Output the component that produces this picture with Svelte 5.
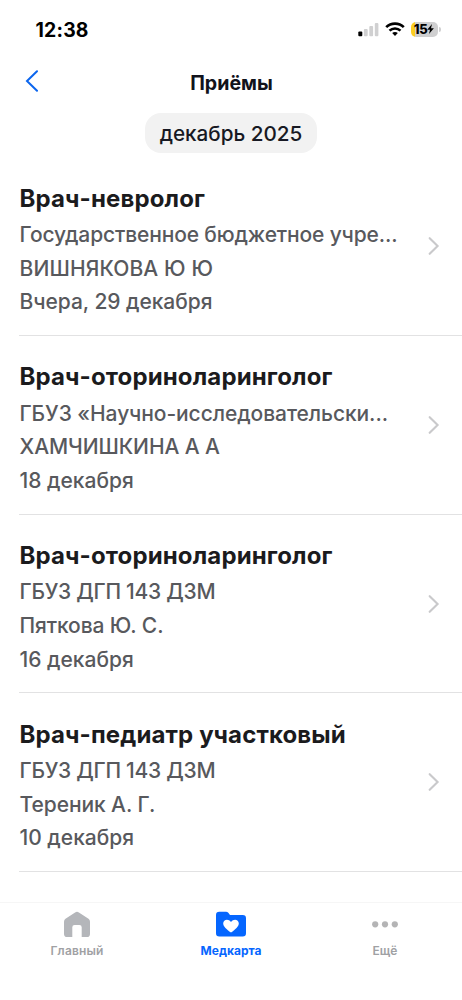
<script>
  const visits = [
    {
      title: 'Врач-невролог',
      lines: [['Государственное бюджетное учре...', -0.14], ['ВИШНЯКОВА Ю Ю', 0.13], ['Вчера, 29 декабря', -0.05]]
    },
    {
      title: 'Врач-оториноларинголог',
      lines: [['ГБУЗ «Научно-исследовательски...', -0.07], ['ХАМЧИШКИНА А А', -0.08], ['18 декабря', 0]]
    },
    {
      title: 'Врач-оториноларинголог',
      lines: [['ГБУЗ ДГП 143 ДЗМ', -0.28], ['Пяткова Ю. С.', -0.1], ['16 декабря', 0]]
    },
    {
      title: 'Врач-педиатр участковый',
      lines: [['ГБУЗ ДГП 143 ДЗМ', -0.28], ['Тереник А. Г.', -0.08], ['10 декабря', 0]]
    }
  ];
</script>

<div class="screen">
  <div class="status">
    <span class="time">12:38</span>
    <div class="indicators">
      <svg width="21" height="15" viewBox="0 0 21 15">
        <rect x="0.3" y="9.5" width="4" height="4.7" rx="1" fill="#000" />
        <rect x="5.9" y="7" width="3.8" height="7.2" rx="1" fill="#d0d0d1" />
        <rect x="11.3" y="4" width="3.8" height="10.2" rx="1" fill="#d0d0d1" />
        <rect x="16.8" y="1" width="3.6" height="13.2" rx="1" fill="#d0d0d1" />
      </svg>
      <svg class="wifi" width="20" height="15" viewBox="0 0 20 15">
        <g fill="none" stroke="#000" stroke-width="2.6">
          <path d="M1.2 5.1C6 .4 14 .4 18.8 5.1" />
          <path d="M4.5 8.6C7.6 5.7 12.4 5.7 15.5 8.6" />
        </g>
        <path d="M7.2 11.1C8.8 9.6 11.2 9.6 12.8 11.1L10 14Z" fill="#000" />
      </svg>
      <div class="battery">
        <span>15</span>
        <svg width="7" height="10" viewBox="0 0 7 10"><path d="M5 0L.2 5.7H3L2 10L6.9 4.2H4Z" fill="#000" /></svg>
      </div>
      <i class="cap"></i>
    </div>
  </div>

  <header>
    <svg width="14" height="22" viewBox="0 0 14 22"><path d="M12 1.2L2 11L12 20.8" fill="none" stroke="#0b65ee" stroke-width="2" stroke-linecap="round" /></svg>
    <h1>Приёмы</h1>
    <span></span>
  </header>

  <div class="month"><span>декабрь 2025</span></div>

  <main>
    {#each visits as v}
      <article>
        <div class="info">
          <h2>{v.title}</h2>
          {#each v.lines as [text, tracking]}
            <p style:letter-spacing="{tracking}px">{text}</p>
          {/each}
        </div>
        <svg width="12" height="18" viewBox="0 0 12 18"><path d="M1.7 1.2L9.6 9L1.7 16.8" fill="none" stroke="#c9c9cb" stroke-width="2.1" stroke-linecap="round" /></svg>
      </article>
    {/each}
  </main>

  <nav>
    <div class="tab">
      <svg width="30" height="30" viewBox="0 0 30 30">
        <path d="M13.1 2.4Q15 1.1 16.9 2.4L26.5 8.8Q28 9.9 28 11.8V23.9Q28 27 24.9 27H19.7V17.3Q19.7 15 17.4 15H12.6Q10.3 15 10.3 17.3V27H5.1Q2 27 2 23.9V11.8Q2 9.9 3.5 8.8Z" fill="#b4b6ba" />
      </svg>
      <span>Главный</span>
    </div>
    <div class="tab active">
      <svg width="30" height="30" viewBox="0 0 30 30">
        <path d="M0 5Q0 1.7 3.3 1.7H10Q11.4 1.7 12.3 2.8L14 5H26.7Q30 5 30 8.3V23.3Q30 26.6 26.7 26.6H3.3Q0 26.6 0 23.3Z" fill="#0566ff" />
        <path d="M15 22.5C10.6 19.2 7.2 16.4 7.2 13.4C7.2 9.5 12.3 8.2 15 11.9C17.7 8.2 22.8 9.5 22.8 13.4C22.8 16.4 19.4 19.2 15 22.5Z" fill="#fff" />
      </svg>
      <span>Медкарта</span>
    </div>
    <div class="tab">
      <svg width="30" height="30" viewBox="0 0 30 30" fill="#b4b4b5"><circle cx="5.2" cy="14.3" r="3.1" /><circle cx="15" cy="14.3" r="3.1" /><circle cx="24.8" cy="14.3" r="3.1" /></svg>
      <span>Ещё</span>
    </div>
  </nav>
</div>

<style>
  :global(body) { margin: 0; background: #fff; }
  .screen { width: 462px; height: 1000px; display: flex; flex-direction: column; overflow: hidden; font-family: Inter, "Liberation Sans", sans-serif; background: #fff; }
  svg { display: block; flex: none; }
  h1, h2, p { margin: 0; }
  .status { height: 58px; display: flex; justify-content: space-between; box-sizing: border-box; padding: 0 21.5px 0 35.5px; }
  .time { font-size: 19.4px; font-weight: 700; line-height: 24px; margin-top: 18px; letter-spacing: .2px; color: #000; }
  .indicators { display: flex; margin-top: 22px; }
  .wifi { margin-left: 6px; }
  .battery { margin: -.5px 0 0 6px; width: 27px; height: 15px; border-radius: 5px; background: linear-gradient(90deg, #fbcd22 0 4px, #cfcfd0 4px); display: flex; align-items: center; justify-content: center; font-size: 13px; font-weight: 800; letter-spacing: -.3px; color: #000; line-height: 15px; }
  .cap { width: 2px; height: 5px; margin: 5px 0 0 1px; border-radius: 0 2px 2px 0; background: #cfcfd0; }
  header { height: 48px; display: grid; grid-template-columns: 40px 1fr 40px; align-items: center; padding: 0 24px 0 25px; margin-top: -1px; }
  h1 { text-align: center; font-size: 19.6px; font-weight: 700; line-height: 24px; padding-top: 3px; color: #11131c; }
  .month { margin-top: 8px; height: 40px; display: flex; justify-content: center; }
  .month span { width: 172px; border-radius: 16px; background: #f2f2f2; text-align: center; font-size: 20.7px; font-weight: 500; line-height: 41px; color: #171923; }
  main { flex: 1; margin-top: 4.6px; }
  article { height: 178.6px; box-sizing: border-box; margin-left: 19px; border-bottom: 1px solid #e2e2e3; display: flex; justify-content: space-between; align-items: center; padding-right: 22px; }
  .info { padding: 7px 0 0 .5px; }
  h2 { font-size: 24px; font-weight: 700; line-height: 36px; margin-bottom: 1.3px; letter-spacing: .13px; color: #1b1b1d; white-space: nowrap; }
  p { font-size: 21px; font-weight: 500; line-height: 33.6px; color: #58595d; white-space: nowrap; }
  nav { height: 98px; border-top: 1px solid #f6f6f6; display: grid; grid-template-columns: repeat(3, 1fr); box-sizing: border-box; }
  .tab { display: flex; flex-direction: column; align-items: center; padding-top: 7px; font-size: 12px; font-weight: 600; letter-spacing: .15px; color: #a0a1a4; }
  .tab span { line-height: 16px; margin-top: 3px; }
  .active { color: #0566ff; font-weight: 700; letter-spacing: 0; }
</style>
